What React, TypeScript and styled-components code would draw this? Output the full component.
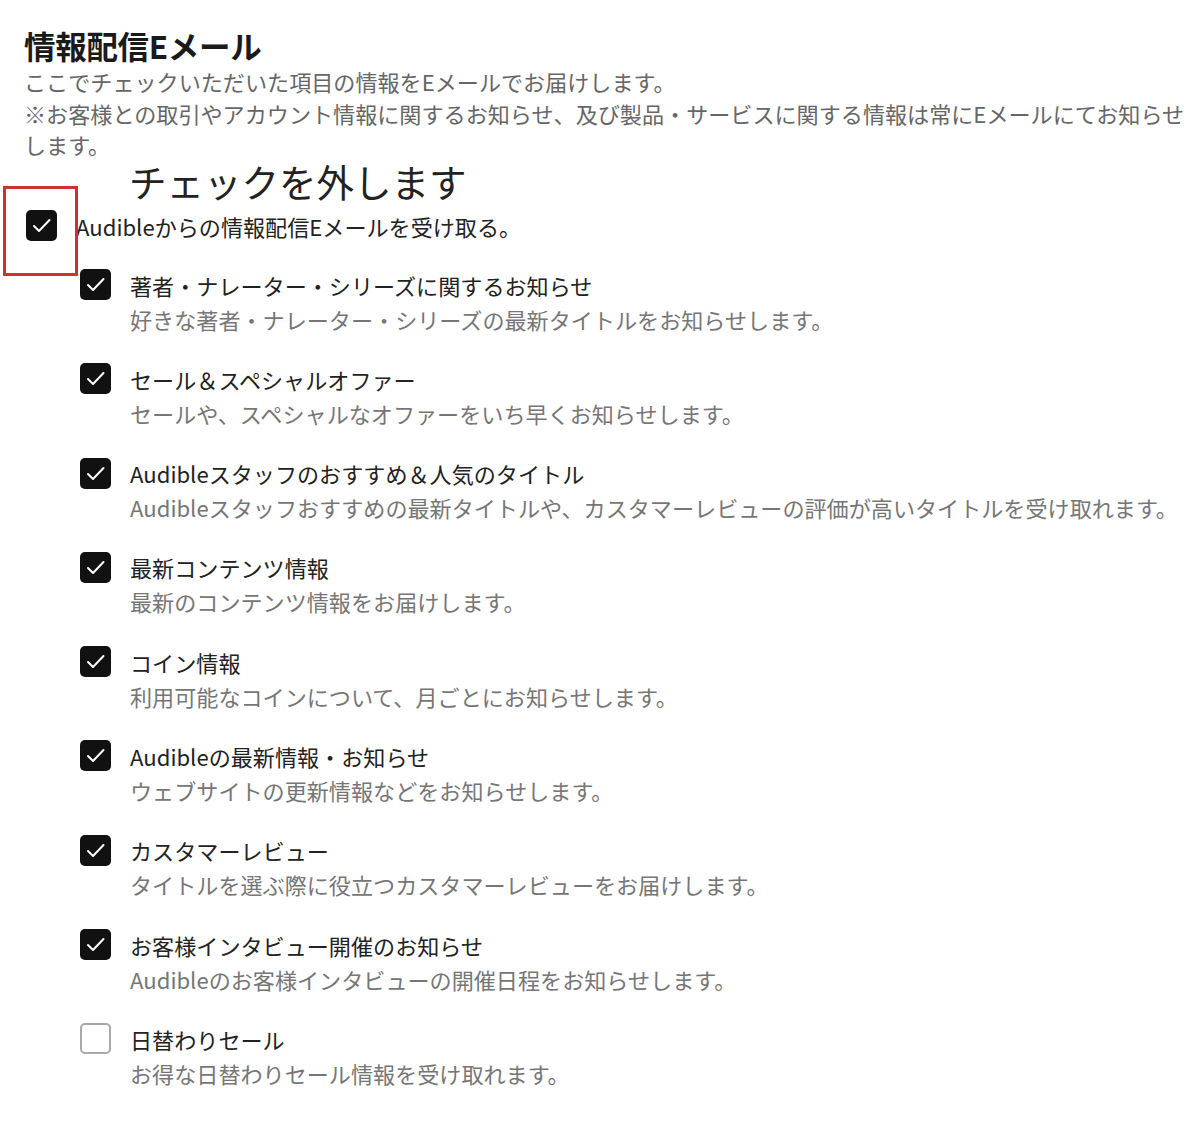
import React, { FC } from "react";
import styled, { createGlobalStyle } from "styled-components";

const GlobalStyle = createGlobalStyle`
  html, body {
    margin: 0;
    padding: 0;
    background: #ffffff;
  }
  body {
    font-family: "Noto Sans CJK JP", "Noto Sans", sans-serif;
    color: #222222;
  }
`;

const Page = styled.div`
  width: 1200px;
  box-sizing: border-box;
  padding: 25px 12px 40px 24px;
`;

const Title = styled.h1`
  margin: 0;
  font-size: 31.5px;
  font-weight: 700;
  line-height: 40px;
  letter-spacing: -0.3px;
  color: #1a1a1a;
`;

const Lead = styled.p`
  margin: 1px 0 0;
  font-size: 22.1px;
  line-height: 31.5px;
  color: #666666;
`;

const MasterRow = styled.div`
  position: relative;
  display: flex;
  align-items: center;
  gap: 19px;
  margin-top: 48px;
  padding-left: 2px;
  height: 34px;
`;

const Label = styled.span<{ $muted?: boolean }>`
  font-size: 22.1px;
  line-height: 34px;
  color: ${({ $muted }) => ($muted ? "#767676" : "#222222")};
  white-space: nowrap;
`;

// annotation laid over the screenshot
const Callout = styled.span`
  position: absolute;
  left: 105px;
  top: -46px;
  font-size: 37.5px;
  line-height: 36px;
  color: #222222;
  white-space: nowrap;
`;

const RedFrame = styled.div`
  position: absolute;
  left: -21px;
  top: -23px;
  width: 75px;
  height: 90px;
  box-sizing: border-box;
  border: 3px solid #d0302f;
`;

const List = styled.ul`
  list-style: none;
  margin: 25px 0 0;
  padding: 0 0 0 56px;
  display: flex;
  flex-direction: column;
  gap: 26.3px;
`;

const Item = styled.li`
  display: flex;
  align-items: flex-start;
  gap: 19px;
`;

const BoxSlot = styled.div`
  height: 34px;
  display: flex;
  align-items: center;
`;

const Box = styled.span<{ $checked: boolean }>`
  width: 31px;
  height: 31px;
  box-sizing: border-box;
  border-radius: 5px;
  display: flex;
  align-items: center;
  justify-content: center;
  background: ${({ $checked }) => ($checked ? "#111111" : "#ffffff")};
  border: ${({ $checked }) => ($checked ? "none" : "2.5px solid #a9a9a9")};
`;

const Texts = styled.div`
  display: flex;
  flex-direction: column;
`;

const Check: FC<{ checked: boolean }> = ({ checked }) => (
  <Box $checked={checked}>
    {checked && (
      <svg width="31" height="31" viewBox="0 0 31 31" fill="none">
        <path
          d="M8 16 L13 21 L23.5 10"
          stroke="#ffffff"
          strokeWidth="2"
          strokeLinecap="round"
          strokeLinejoin="round"
        />
      </svg>
    )}
  </Box>
);

interface IOption {
  title: string;
  note: string;
  checked: boolean;
}

const options: IOption[] = [
  {
    title: "著者・ナレーター・シリーズに関するお知らせ",
    note: "好きな著者・ナレーター・シリーズの最新タイトルをお知らせします。",
    checked: true,
  },
  {
    title: "セール＆スペシャルオファー",
    note: "セールや、スペシャルなオファーをいち早くお知らせします。",
    checked: true,
  },
  {
    title: "Audibleスタッフのおすすめ＆人気のタイトル",
    note: "Audibleスタッフおすすめの最新タイトルや、カスタマーレビューの評価が高いタイトルを受け取れます。",
    checked: true,
  },
  {
    title: "最新コンテンツ情報",
    note: "最新のコンテンツ情報をお届けします。",
    checked: true,
  },
  {
    title: "コイン情報",
    note: "利用可能なコインについて、月ごとにお知らせします。",
    checked: true,
  },
  {
    title: "Audibleの最新情報・お知らせ",
    note: "ウェブサイトの更新情報などをお知らせします。",
    checked: true,
  },
  {
    title: "カスタマーレビュー",
    note: "タイトルを選ぶ際に役立つカスタマーレビューをお届けします。",
    checked: true,
  },
  {
    title: "お客様インタビュー開催のお知らせ",
    note: "Audibleのお客様インタビューの開催日程をお知らせします。",
    checked: true,
  },
  {
    title: "日替わりセール",
    note: "お得な日替わりセール情報を受け取れます。",
    checked: false,
  },
];

const App: FC = () => {
  return (
    <>
      <GlobalStyle />
      <Page>
        <Title>情報配信Eメール</Title>
        <Lead>
          ここでチェックいただいた項目の情報をEメールでお届けします。
          <br />
          ※お客様との取引やアカウント情報に関するお知らせ、及び製品・サービスに関する情報は常にEメールにてお知らせします。
        </Lead>
        <MasterRow>
          <Callout>チェックを外します</Callout>
          <RedFrame />
          <Check checked />
          <Label>Audibleからの情報配信Eメールを受け取る。</Label>
        </MasterRow>
        <List>
          {options.map((o) => (
            <Item key={o.title}>
              <BoxSlot>
                <Check checked={o.checked} />
              </BoxSlot>
              <Texts>
                <Label>{o.title}</Label>
                <Label $muted>{o.note}</Label>
              </Texts>
            </Item>
          ))}
        </List>
      </Page>
    </>
  );
};

export default App;
